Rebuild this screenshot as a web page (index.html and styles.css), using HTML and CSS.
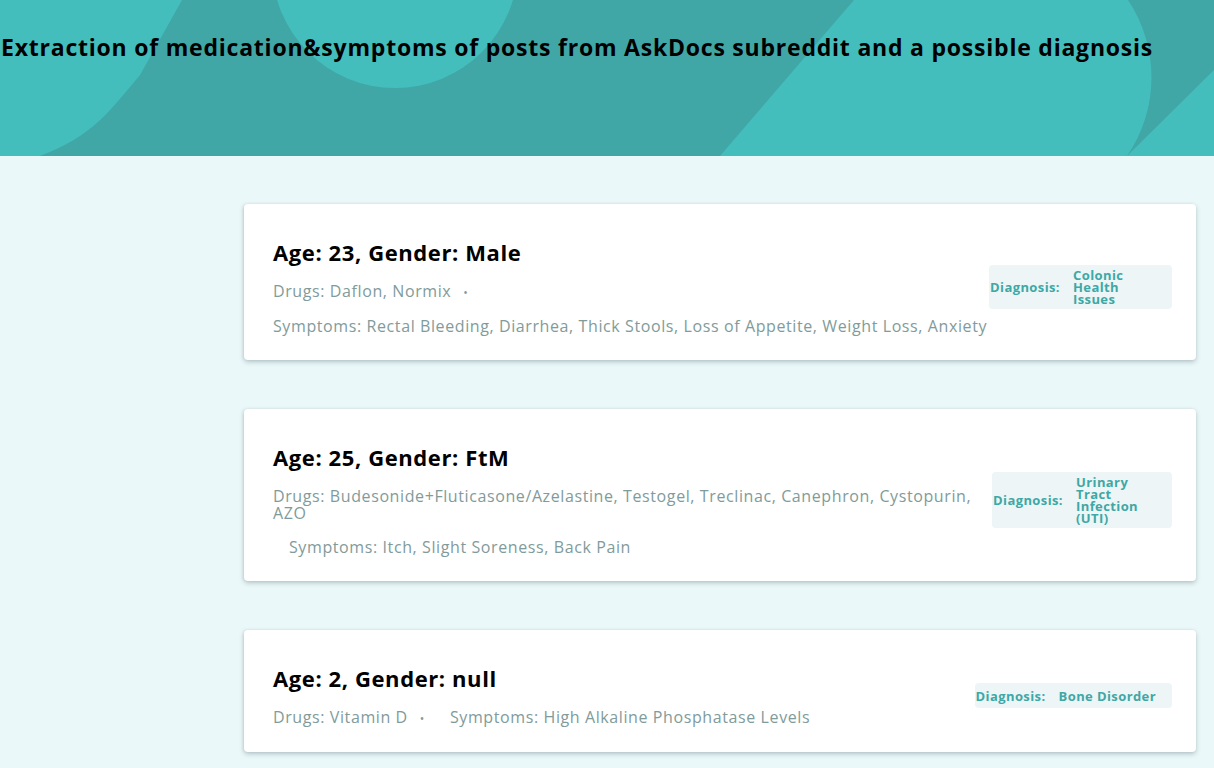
FILE: index.html
```html
<!DOCTYPE html>
<html lang="en">
<head>
<meta charset="utf-8">
<title>AskDocs extraction</title>
<link rel="stylesheet" href="styles.css">
</head>
<body>
<header class="hero">
  <svg class="hero-bg" width="1214" height="156" viewBox="0 0 1214 156" preserveAspectRatio="none" aria-hidden="true">
    <rect x="0" y="0" width="1214" height="156" fill="#43bebd"/>
    <path d="M182 0 L854 0 L720 156 L40 156 C95 135 110 110 140 75 Z" fill="#41a7a6"/>
    <circle cx="395" cy="-35" r="123" fill="#43bebd"/>
    <path d="M1128 0 L1214 0 L1214 70 L1127 156 A139 139 0 0 0 1128 0 Z" fill="#41a7a6"/>
  </svg>
  <h1 class="hero-title">Extraction of medication&amp;symptoms of posts from AskDocs subreddit and a possible diagnosis</h1>
</header>

<main class="list">
  <article class="card">
    <div class="card-main">
      <h2 class="card-title">Age: 23, Gender: Male</h2>
      <div class="meta">
        <span class="meta-item">Drugs: Daflon, Normix</span>
        <span class="dot">•</span>
        <span class="meta-item">Symptoms: Rectal Bleeding, Diarrhea, Thick Stools, Loss of Appetite, Weight Loss, Anxiety</span>
      </div>
    </div>
    <div class="diag">
      <span class="diag-label">Diagnosis:</span>
      <span class="diag-value diag-value--narrow">Colonic Health Issues</span>
    </div>
  </article>

  <article class="card">
    <div class="card-main">
      <h2 class="card-title">Age: 25, Gender: FtM</h2>
      <div class="meta">
        <span class="meta-item meta-item--block">Drugs: Budesonide+Fluticasone/Azelastine, Testogel, Treclinac, Canephron, Cystopurin, AZO</span>
        <span class="meta-item meta-item--indent">Symptoms: Itch, Slight Soreness, Back Pain</span>
      </div>
    </div>
    <div class="diag">
      <span class="diag-label">Diagnosis:</span>
      <span class="diag-value diag-value--narrower">Urinary Tract Infection (UTI)</span>
    </div>
  </article>

  <article class="card">
    <div class="card-main">
      <h2 class="card-title">Age: 2, Gender: null</h2>
      <div class="meta">
        <span class="meta-item">Drugs: Vitamin D</span>
        <span class="dot dot--wide">•</span>
        <span class="meta-item">Symptoms: High Alkaline Phosphatase Levels</span>
      </div>
    </div>
    <div class="diag">
      <span class="diag-label">Diagnosis:</span>
      <span class="diag-value diag-value--single">Bone Disorder</span>
    </div>
  </article>
</main>
</body>
</html>
```

FILE: styles.css
```css
* { box-sizing: border-box; }

html, body {
  margin: 0;
  padding: 0;
}

body {
  background: #ebf8f9;
  font-family: "Open Sans", "Lato", sans-serif;
  color: #000;
}

.hero {
  position: relative;
  height: 156px;
  overflow: hidden;
  padding-top: 32px;
}

.hero-bg {
  position: absolute;
  left: 0;
  top: 0;
  z-index: 0;
}

.hero-title {
  position: relative;
  z-index: 1;
  margin: 0;
  padding-left: 1px;
  font-size: 23px;
  line-height: 30px;
  font-weight: 700;
  letter-spacing: 0.78px;
  color: #000;
  white-space: nowrap;
}

.list {
  display: flex;
  flex-direction: column;
  gap: 49px;
  padding: 48px 18px 40px 244px;
}

.card {
  display: flex;
  align-items: center;
  background: #fff;
  border-radius: 4px;
  box-shadow: 0 2px 5px rgba(40, 70, 80, 0.28), -1px 0 3px rgba(40, 70, 80, 0.08);
  padding: 34px 24px 25px 29px;
}

.card-main {
  flex: 1 1 auto;
  min-width: 0;
}

.card-title {
  margin: 0 0 17px;
  font-size: 22px;
  line-height: 28px;
  font-weight: 700;
  letter-spacing: 0.6px;
  color: #000;
}

.meta {
  display: flex;
  flex-wrap: wrap;
  align-items: baseline;
  row-gap: 17px;
  font-size: 16px;
  line-height: 17px;
  font-weight: 400;
  letter-spacing: 0.6px;
  color: #819b9b;
}

.meta-item--block {
  flex: 1 1 100%;
}

.meta-item--indent {
  margin-left: 16px;
}

.dot {
  margin-left: 12px;
  font-size: 12px;
}

.dot--wide {
  margin: 0 25px 0 12px;
}

.diag {
  flex: none;
  display: flex;
  align-items: center;
  min-height: 25px;
  padding: 4px 0;
  background: #edf5f6;
  border-radius: 4px;
  color: #3da8a6;
  font-size: 13px;
  font-weight: 700;
  line-height: 12px;
  letter-spacing: 0.4px;
}

.diag-label {
  width: 84px;
  padding-left: 1px;
}

.diag-value {
  padding-right: 16px;
}

.diag-value--narrow { width: 99px; }
.diag-value--narrower { width: 96px; }
.diag-value--single { white-space: nowrap; }
```
